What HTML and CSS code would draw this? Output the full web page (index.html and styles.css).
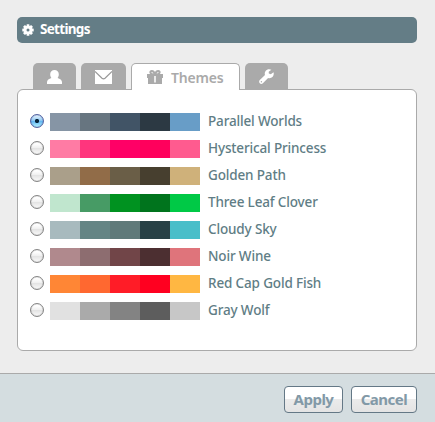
FILE: index.html
```html
<!DOCTYPE html>
<html lang="en">
<head>
<meta charset="utf-8">
<title>Settings</title>
<link rel="stylesheet" href="styles.css">
</head>
<body>
<main class="content">
  <header class="title">
    <svg width="12" height="12" viewBox="0 0 12 12"><g fill="#fff"><circle cx="6" cy="6" r="4.300"/><g id="teeth"><rect x="4.600" y="0.300" width="2.800" height="11.400" rx=".5"/><rect x=".3" y="4.600" width="11.400" height="2.800" rx=".5"/></g><use href="#teeth" transform="rotate(45 6 6)"/></g><circle cx="6" cy="6" r="1.500" fill="#647d86"/></svg>
    <h1>Settings</h1>
  </header>
  <nav class="tabs">
    <a class="tab user"><svg width="15" height="14" viewBox="0 0 15 14"><path fill="#fff" d="M7.500 0C10 0 11.800 1.800 11.800 4.300C11.800 6 11.300 7 10.600 8C13 8.800 15 10.200 15 12V14H0V12C0 10.200 2 8.800 4.400 8C3.700 7 3.200 6 3.200 4.300C3.200 1.800 5 0 7.500 0Z"/></svg></a>
    <a class="tab mail"><svg width="17" height="14" viewBox="0 0 17 14"><path fill="#fff" d="M0 0H17V14H0Z"/><path fill="none" stroke="#999" stroke-width="1.200" d="M0 1.500L7 8.200Q8.500 9.500 10 8.200L17 1.500"/></svg></a>
    <a class="tab active"><svg width="16" height="14" viewBox="0 0 16 14"><path fill="#aaa" d="M0 4H16V8H15V14H1V8H0Z"/><path fill="none" stroke="#aaa" stroke-width="2" d="M8 4.500C2.500 5 2.500 1 4.800 1C6.500 1 7.500 2.700 8 4.500C8.500 2.700 9.500 1 11.200 1C13.500 1 13.500 5 8 4.500"/><path stroke="#fff" stroke-width="1.500" d="M8 6V12.500"/></svg><span>Themes</span></a>
    <a class="tab tools"><svg width="15" height="15" viewBox="0 0 15 15"><path fill="#fff" d="M14.500 3.300L11.800 5.200L9.800 4.600L9.700 2.700L12.400.8C10.400-.2 7.900.2 6.600 1.900C5.700 3.100 5.500 4.500 6 5.900L.8 11.100C-.2 12.100-.1 13.500.8 14.300C1.700 15.200 3 15.100 3.900 14.200L9.100 8.900C10.700 9.500 12.500 9 13.700 7.700C14.800 6.500 15 4.800 14.500 3.300Z"/><circle cx="2.400" cy="12.700" r=".7" fill="#aaa"/></svg></a>
  </nav>
  <section class="panel">
    <label class="theme"><input type="radio" name="theme" checked><span class="swatch"><i style="background:#8695a5"></i><i style="background:#677580"></i><i style="background:#415466"></i><i style="background:#2c3943"></i><i style="background:#689dc7"></i></span><span class="name">Parallel Worlds</span></label>
    <label class="theme"><input type="radio" name="theme"><span class="swatch"><i style="background:#ff7ba4"></i><i style="background:#ff357d"></i><i style="background:#ff0066"></i><i style="background:#ff005c"></i><i style="background:#ff5b8f"></i></span><span class="name">Hysterical Princess</span></label>
    <label class="theme"><input type="radio" name="theme"><span class="swatch"><i style="background:#aa9f8a"></i><i style="background:#916c48"></i><i style="background:#6a5e47"></i><i style="background:#473f2f"></i><i style="background:#cfb17a"></i></span><span class="name">Golden Path</span></label>
    <label class="theme"><input type="radio" name="theme"><span class="swatch"><i style="background:#c0e6ce"></i><i style="background:#479b65"></i><i style="background:#009220"></i><i style="background:#00741d"></i><i style="background:#00c946"></i></span><span class="name">Three Leaf Clover</span></label>
    <label class="theme"><input type="radio" name="theme"><span class="swatch"><i style="background:#a8babe"></i><i style="background:#648585"></i><i style="background:#607a7a"></i><i style="background:#284146"></i><i style="background:#49bec9"></i></span><span class="name">Cloudy Sky</span></label>
    <label class="theme"><input type="radio" name="theme"><span class="swatch"><i style="background:#b0898d"></i><i style="background:#8d6d70"></i><i style="background:#714548"></i><i style="background:#4c2f31"></i><i style="background:#df747b"></i></span><span class="name">Noir Wine</span></label>
    <label class="theme"><input type="radio" name="theme"><span class="swatch"><i style="background:#ff8635"></i><i style="background:#ff6830"></i><i style="background:#ff1c27"></i><i style="background:#ff0020"></i><i style="background:#ffb742"></i></span><span class="name">Red Cap Gold Fish</span></label>
    <label class="theme"><input type="radio" name="theme"><span class="swatch"><i style="background:#e1e1e1"></i><i style="background:#aaaaaa"></i><i style="background:#838383"></i><i style="background:#5d5d5d"></i><i style="background:#c7c7c7"></i></span><span class="name">Gray Wolf</span></label>
  </section>
</main>
<footer class="actions">
  <button class="apply">Apply</button>
  <button class="cancel">Cancel</button>
</footer>
</body>
</html>
```
FILE: styles.css
```css
* { box-sizing: border-box; }
body {
  margin: 0;
  height: 422px;
  overflow: hidden;
  display: flex;
  flex-direction: column;
  background: #ededed;
  font-family: "Noto Sans", "Open Sans", sans-serif;
}
svg { display: block; flex: none; }
.content { height: 373px; padding: 17px 18px 0 17px; }
.title {
  height: 26px;
  padding: 0 0 1px 5px;
  display: flex;
  align-items: center;
  gap: 6px;
  border-radius: 5px;
  background: #647d86;
  color: #fff;
}
h1 { margin: 0; font-size: 13.5px; line-height: 25px; font-weight: 700; letter-spacing: -.7px; }
.tabs {
  display: flex;
  gap: 5px;
  height: 27px;
  margin: 20px 0 -1px 16px;
  position: relative;
}
.tab {
  height: 26px;
  display: flex;
  justify-content: center;
  padding-top: 7px;
  border-radius: 5px 5px 0 0;
  background: #aaa;
}
.user { width: 43px; }
.mail { width: 45px; }
.tools { width: 43px; padding-top: 6px; }
.active {
  width: 109px;
  height: 27px;
  justify-content: flex-start;
  padding: 6px 0 0 15px;
  gap: 8px;
  border: 1px solid #aaa;
  border-bottom: 0;
  background: #fff;
  color: #aaa;
  font-size: 14px;
  line-height: 15px;
  font-weight: 600;
  letter-spacing: -.2px;
}
.panel {
  height: 262px;
  padding: 18px 12px;
  border: 1px solid #aaa;
  border-radius: 6px;
  background: #fff;
}
.theme { display: flex; align-items: flex-start; height: 27px; color: #607d85; }
.theme input {
  appearance: none;
  width: 14px;
  height: 14px;
  margin: 6px 6px 0 0;
  border: 1px solid #858585;
  border-radius: 50%;
  background: linear-gradient(#fff 0 15%, #f0f0f0 48%, #e3e3e3 52%, #fafafa);
  box-shadow: inset 0 0 1px #999;
}
.theme input:checked {
  border-color: #5362a0;
  background: radial-gradient(circle, #06243c 0 1.700px, transparent 2.500px), linear-gradient(#e3f1fc 5%, #93ccf4 45%, #62b7f2 53%, #b8f5ff);
  box-shadow: inset 0 0 1px #436bb0;
}
.swatch { display: flex; width: 150px; height: 18px; margin-top: 5px; }
.swatch i { width: 30px; }
.name { margin: 4px 0 0 8px; font-size: 13.5px; font-weight: 500; line-height: 18px; letter-spacing: -.15px; white-space: nowrap; }
.actions {
  height: 49px;
  display: flex;
  justify-content: flex-end;
  gap: 8px;
  padding: 12px 18px 0 0;
  border-top: 1px solid #aaa;
  background: #d4dde0;
}
.actions button {
  height: 27px;
  padding: 0 0 1px;
  border: 1px solid #647886;
  border-radius: 4px;
  background: linear-gradient(#fff 0 48%, #ebebeb 50%, #e4e4e4);
  color: #8299a7;
  font: 700 15px "Noto Sans", "Open Sans", sans-serif;
  letter-spacing: -.5px;
}
.actions .apply { width: 59px; }
.actions .cancel { width: 66px; }
```
